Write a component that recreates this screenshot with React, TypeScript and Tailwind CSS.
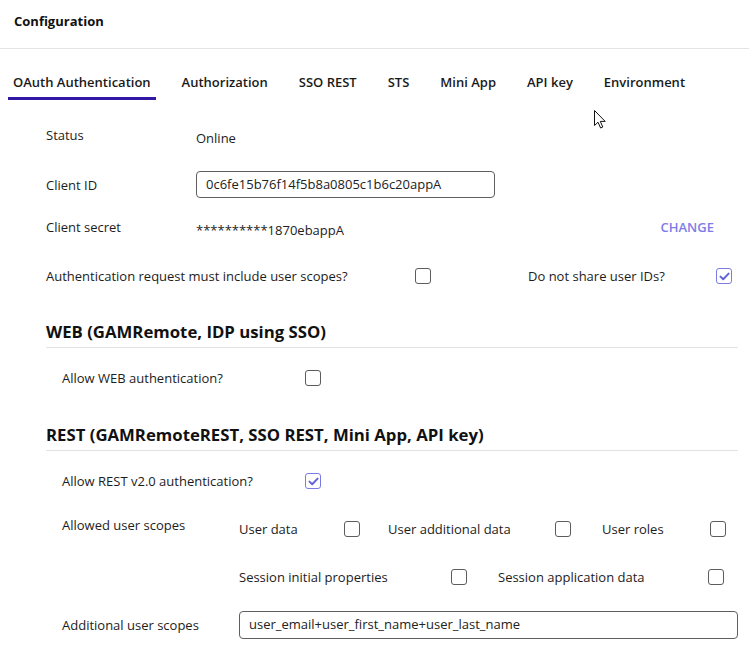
import React from 'react';

const font = { fontFamily: '"Open Sans", "Liberation Sans", sans-serif' };

function Checkbox({ checked = false }: { checked?: boolean }) {
  return (
    <div
      className={
        checked
          ? 'w-[16px] h-[16px] shrink-0 rounded-[3px] border-[1.5px] border-[#7b7be6] flex items-center justify-center'
          : 'w-[16px] h-[16px] shrink-0 rounded-[3px] border-[1.5px] border-[#5c5c5c]'
      }
    >
      {checked && (
        <svg width="11" height="9" viewBox="0 0 11 9" fill="none">
          <path d="M1.5 4.6 L4.2 7.2 L9.6 1.6" stroke="#6464d8" strokeWidth="2" strokeLinecap="round" strokeLinejoin="round" />
        </svg>
      )}
    </div>
  );
}

const tabs = ['OAuth Authentication', 'Authorization', 'SSO REST', 'STS', 'Mini App', 'API key', 'Environment'];

const label = 'text-[13px] font-medium text-[#1c1c1c] leading-[18px]';
const value = 'text-[13px] text-[#222] leading-[18px]';

export default function App() {
  return (
    <div className="w-[749px] h-[657px] bg-white relative overflow-hidden" style={font}>
      {/* Header */}
      <div className="h-[49px] px-[14px] flex items-center border-b border-[#e4e4e4]">
        <span className="text-[13px] font-bold text-[#111] -mt-[4px]">Configuration</span>
      </div>

      {/* Tabs */}
      <div className="flex gap-[21px] pl-[8px] pt-[23px]">
        {tabs.map((t, i) => (
          <div
            key={t}
            className={
              i === 0
                ? 'px-[5px] pb-[5px] border-b-[3px] border-[#3318a6] text-[13px] font-semibold text-[#1a1a1a] leading-[20px]'
                : 'px-[5px] pb-[5px] border-b-[3px] border-transparent text-[13px] font-semibold text-[#1a1a1a] leading-[20px]'
            }
          >
            {t}
          </div>
        ))}
      </div>

      {/* Body */}
      <div className="pl-[46px] pr-[11px] flex flex-col">
        <div className="flex items-start mt-[26px] h-[18px]">
          <div className={`${label} w-[150px]`}>Status</div>
          <div className={`${value} mt-[3px]`}>Online</div>
        </div>

        <div className="flex items-center mt-[27px] h-[27px]">
          <div className={`${label} w-[150px]`}>Client ID</div>
          <div className="w-[299px] h-[27px] border border-[#5f5f5f] rounded-[4px] px-[9px] flex items-center text-[13px] text-[#222]">
            0c6fe15b76f14f5b8a0805c1b6c20appA
          </div>
        </div>

        <div className="flex items-start mt-[20px] h-[18px]">
          <div className={`${label} w-[150px]`}>Client secret</div>
          <div className={`${value} mt-[3px] flex-1`}>**********1870ebappA</div>
          <div className="text-[13px] font-semibold text-[#7d7de8] leading-[18px] mr-[24px]">CHANGE</div>
        </div>

        <div className="flex items-center mt-[31px] h-[18px]">
          <div className={`${label} w-[369px]`}>Authentication request must include user scopes?</div>
          <Checkbox />
          <div className={`${label} ml-[97px] w-[188px]`}>Do not share user IDs?</div>
          <Checkbox checked />
        </div>

        <div className="mt-[36px] pb-[4px] border-b border-[#e2e2e2] text-[16.75px] font-bold text-[#111] leading-[22px]">
          WEB (GAMRemote, IDP using SSO)
        </div>

        <div className="flex items-center mt-[21px] h-[18px] pl-[16px]">
          <div className={`${label} w-[243px]`}>Allow WEB authentication?</div>
          <Checkbox />
        </div>

        <div className="mt-[37px] pb-[4px] border-b border-[#e2e2e2] text-[16.75px] font-bold text-[#111] leading-[22px]">
          REST (GAMRemoteREST, SSO REST, Mini App, API key)
        </div>

        <div className="flex items-center mt-[21px] h-[18px] pl-[16px]">
          <div className={`${label} w-[243px]`}>Allow REST v2.0 authentication?</div>
          <Checkbox checked />
        </div>

        <div className="flex items-start mt-[26px] pl-[16px]">
          <div className={`${label} w-[177px]`}>Allowed user scopes</div>
          <div className="flex flex-col gap-[32px] mt-[5px]">
            <div className="flex items-center h-[16px]">
              <div className={`${label} w-[105px]`}>User data</div>
              <Checkbox />
              <div className={`${label} ml-[28px] w-[167px]`}>User additional data</div>
              <Checkbox />
              <div className={`${label} ml-[31px] w-[108px]`}>User roles</div>
              <Checkbox />
            </div>
            <div className="flex items-center h-[16px]">
              <div className={`${label} w-[212px]`}>Session initial properties</div>
              <Checkbox />
              <div className={`${label} ml-[31px] w-[210px]`}>Session application data</div>
              <Checkbox />
            </div>
          </div>
        </div>

        <div className="flex items-center mt-[26px] h-[28px] pl-[16px]">
          <div className={`${label} w-[177px]`}>Additional user scopes</div>
          <div className="flex-1 h-[28px] border border-[#5f5f5f] rounded-[4px] px-[9px] flex items-center text-[13px] text-[#222]">
            user_email+user_first_name+user_last_name
          </div>
        </div>
      </div>

      {/* Mouse cursor */}
      <svg className="absolute left-[594px] top-[110px]" width="13" height="19" viewBox="0 0 13 19">
        <path d="M0.5 0.5 L0.5 15.5 L4 12.2 L6.6 18 L8.8 17 L6.3 11.4 L11.2 11.4 Z" fill="white" stroke="#111" strokeWidth="1" strokeLinejoin="round" />
      </svg>
    </div>
  );
}
